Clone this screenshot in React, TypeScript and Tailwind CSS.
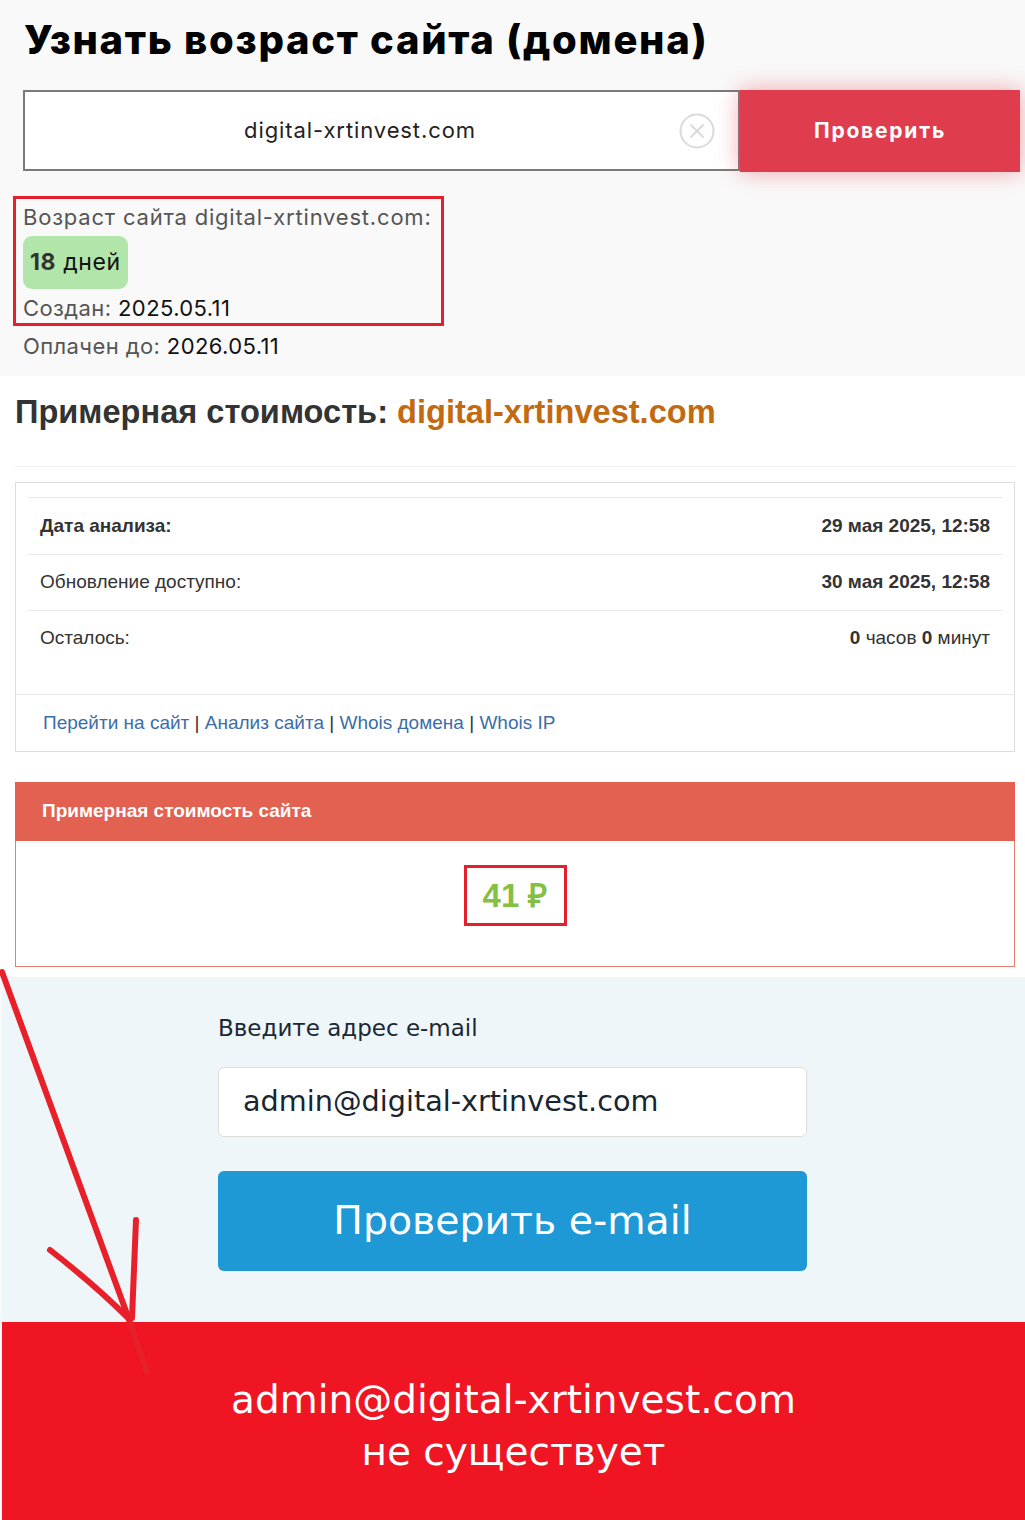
export default function App() {
  return (
    <div className="relative w-[1025px] h-[1520px] overflow-hidden bg-[#f9f9f9]">
      {/* Section 1: domain age */}
      <div className="h-[376px] pl-[23px] pt-[14px] font-['Inter',sans-serif]">
        <h1 className="pl-[1px] text-[40px] leading-[52px] font-extrabold tracking-[1.7px] text-black">
          Узнать возраст сайта (домена)
        </h1>
        <div className="mt-[24px] flex h-[82px] w-[997px]">
          <div className="flex h-[81px] w-[717px] items-center border-2 border-[#7a7a7a] bg-white">
            <div className="flex-1 pl-[16px] text-center text-[22px] tracking-[0.9px] text-[#222]">digital-xrtinvest.com</div>
            <svg className="mr-[23px] h-[36px] w-[36px]" viewBox="0 0 36 36">
              <circle cx="18" cy="18" r="16.5" fill="none" stroke="#dadada" strokeWidth="2" />
              <path d="M11.5 11.5 L24.5 24.5 M24.5 11.5 L11.5 24.5" stroke="#dadada" strokeWidth="2" />
            </svg>
          </div>
          <button className="h-[82px] w-[280px] bg-[#df3d4e] text-[21px] font-bold tracking-[1.8px] text-white shadow-[0_0_22px_rgba(230,60,75,0.45)]">
            Проверить
          </button>
        </div>
        <div className="mt-[24px] ml-[-10px] w-[431px] border-[3px] border-[#e3202b] pl-[7px]">
          <div className="flex h-[37px] items-center text-[22px] tracking-[0.8px] text-[#555]">Возраст сайта digital-xrtinvest.com:</div>
          <div className="inline-flex h-[53px] items-center rounded-[9px] bg-[#b2e5a9] px-[7px] text-[23px] tracking-[0.6px] text-[#111]">
            <span className="font-bold text-[#333]">18</span>
            <span>&nbsp;дней</span>
          </div>
          <div className="flex h-[34px] items-center pt-[4px] text-[22px] tracking-[0.4px] text-[#555]">
            Создан:&nbsp;<span className="text-[#111]">2025.05.11</span>
          </div>
        </div>
        <div className="flex h-[40px] items-center text-[22px] tracking-[0.4px] text-[#555]">
          Оплачен до:&nbsp;<span className="text-[#111]">2026.05.11</span>
        </div>
      </div>

      {/* Section 2: estimated cost */}
      <div className="h-[601px] bg-white pl-[15px] pr-[10px] pt-[14px] font-['Liberation_Sans',Arial,sans-serif] text-[#333]">
        <h2 className="text-[32.6px] leading-[44px] font-bold text-[#333]">
          Примерная стоимость: <span className="text-[#c26a12]">digital-xrtinvest.com</span>
        </h2>
        <div className="mt-[32px] border-t border-[#eeeeee]" />
        <div className="mt-[15px] border border-[#dddddd] text-[19px]">
          <div className="px-[12px] pt-[14px] pb-[28px]">
            <div className="flex h-[57px] items-center justify-between border-t border-[#e8e8e8] pl-[12px] pr-[12px]">
              <span className="font-bold">Дата анализа:</span>
              <span className="font-bold">29 мая 2025, 12:58</span>
            </div>
            <div className="flex h-[56px] items-center justify-between border-t border-[#e8e8e8] pl-[12px] pr-[12px]">
              <span>Обновление доступно:</span>
              <span className="font-bold">30 мая 2025, 12:58</span>
            </div>
            <div className="flex h-[56px] items-center justify-between border-t border-[#e8e8e8] pl-[12px] pr-[12px]">
              <span>Осталось:</span>
              <span>
                <b>0</b> часов <b>0</b> минут
              </span>
            </div>
          </div>
          <div className="flex h-[57px] items-center border-t border-[#e8e8e8] pl-[27px]">
            <span className="text-[#3b6ea8]">Перейти на сайт</span>
            <span>&nbsp;|&nbsp;</span>
            <span className="text-[#3b6ea8]">Анализ сайта</span>
            <span>&nbsp;|&nbsp;</span>
            <span className="text-[#3b6ea8]">Whois домена</span>
            <span>&nbsp;|&nbsp;</span>
            <span className="text-[#3b6ea8]">Whois IP</span>
          </div>
        </div>
        <div className="mt-[30px]">
          <div className="flex h-[59px] items-center bg-[#e36150] px-[27px] text-[19px] font-bold text-white">
            Примерная стоимость сайта
          </div>
          <div className="flex h-[126px] justify-center border-x border-b border-[#e4806f] pt-[24px]">
            <div className="flex h-[61px] w-[103px] items-center justify-center border-[3px] border-[#e3202b] text-[33px] font-bold text-[#84c044]">
              41 ₽
            </div>
          </div>
        </div>
      </div>

      {/* Section 3: email check */}
      <div className="ml-[2px] h-[345px] bg-[#eef6fa] pl-[216px] pt-[36px] font-['DejaVu_Sans',sans-serif]">
        <div className="text-[23px] leading-[30px] text-[#1c2833]">Введите адрес e-mail</div>
        <div className="mt-[24px] flex h-[70px] w-[589px] items-center rounded-[6px] border border-[#dcdcdc] bg-white pl-[24px] text-[28.7px] text-[#1a2530]">
          admin@digital-xrtinvest.com
        </div>
        <button className="mt-[34px] h-[100px] w-[589px] rounded-[6px] bg-[#1f98d6] text-[39.4px] text-white">
          Проверить e-mail
        </button>
      </div>

      {/* Section 4: result */}
      <div className="ml-[2px] h-[198px] bg-[#ef1522] pt-[52px] text-center font-['DejaVu_Sans',sans-serif] text-[39px] leading-[52px] text-white">
        <div>admin@digital-xrtinvest.com</div>
        <div>не существует</div>
      </div>

      {/* Hand-drawn annotation arrow */}
      <svg className="pointer-events-none absolute left-0 top-0" width="1025" height="1520" viewBox="0 0 1025 1520">
        <g stroke="#e8202a" strokeWidth="6" strokeLinecap="round" fill="none">
          <path d="M2 972 L127 1314 L147 1372" />
          <path d="M50 1250 Q95 1285 128 1318" />
          <path d="M136 1220 L132 1318" />
        </g>
      </svg>
    </div>
  );
}
